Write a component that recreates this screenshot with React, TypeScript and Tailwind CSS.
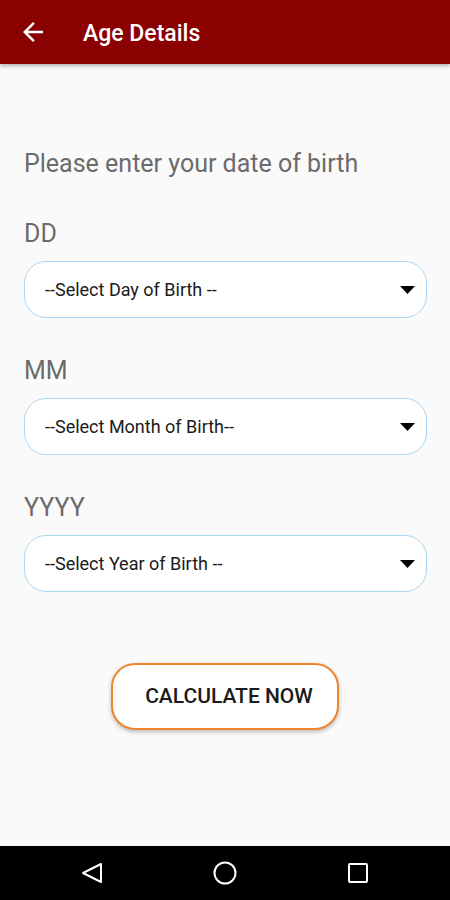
import React from 'react';

const fields = [
  { label: 'DD', placeholder: '--Select Day of Birth --' },
  { label: 'MM', placeholder: '--Select Month of Birth--' },
  { label: 'YYYY', placeholder: '--Select Year of Birth --' },
];

function Caret() {
  return (
    <svg width="15" height="8" viewBox="0 0 15 8" className="shrink-0">
      <path d="M0 0 L15 0 L7.5 8 Z" fill="#000" />
    </svg>
  );
}

export default function App() {
  return (
    <div
      className="flex h-[900px] w-[450px] flex-col overflow-hidden bg-[#fafafa]"
      style={{ fontFamily: 'Roboto, "Noto Sans", sans-serif' }}
    >
      {/* app bar */}
      <header className="relative z-10 flex h-16 shrink-0 items-center bg-[#8b0000] shadow-[0_2px_4px_rgba(0,0,0,0.3)]">
        <svg width="30" height="30" viewBox="0 0 24 24" className="ml-[18px]">
          <path
            d="M20 11H7.83l5.59-5.59L12 4l-8 8 8 8 1.41-1.41L7.83 13H20v-2z"
            fill="#fff"
          />
        </svg>
        <h1 className="ml-[35px] mt-1 text-[23px] font-medium text-white">Age Details</h1>
      </header>

      <main className="flex flex-1 flex-col px-6 pt-[85px]">
        <p className="text-[25px] leading-[30px] text-[#6b6b6b]">Please enter your date of birth</p>

        <div className="mt-10 flex flex-col gap-[38px]">
          {fields.map((f) => (
            <div key={f.label} className="flex flex-col">
              <label className="text-[25px] leading-[30px] text-[#6b6b6b]">{f.label}</label>
              <div className="mr-[-1px] mt-3 flex h-[57px] items-center justify-between rounded-[22px] border border-[#a9d6f5] bg-white pl-5 pr-[11px]">
                <span className="text-[18px] text-[#1a1a1a]">{f.placeholder}</span>
                <Caret />
              </div>
            </div>
          ))}
        </div>

        <div className="mt-[71px] flex justify-center">
          <button className="h-[67px] w-[228px] rounded-[24px] border-2 border-[#f0852f] bg-white pl-2 text-[21px] font-medium text-[#1a1a1a] shadow-[0_2px_4px_rgba(0,0,0,0.25)]">
            CALCULATE NOW
          </button>
        </div>
      </main>

      {/* nav bar */}
      <nav className="flex h-[54px] shrink-0 items-center gap-[93px] bg-black pl-[72px]">
        <div className="flex w-10 justify-center">
          <svg width="22" height="22" viewBox="0 0 22 22">
            <path d="M20 2 L20 20 L2 11 Z" fill="none" stroke="#fff" strokeWidth="2" strokeLinejoin="round" />
          </svg>
        </div>
        <div className="flex w-10 justify-center">
          <svg width="24" height="24" viewBox="0 0 24 24">
            <circle cx="12" cy="12" r="10.5" fill="none" stroke="#fff" strokeWidth="2" />
          </svg>
        </div>
        <div className="flex w-10 justify-center">
          <svg width="22" height="22" viewBox="0 0 22 22">
            <rect x="2" y="2" width="18" height="18" rx="1" fill="none" stroke="#fff" strokeWidth="2" />
          </svg>
        </div>
      </nav>
    </div>
  );
}
